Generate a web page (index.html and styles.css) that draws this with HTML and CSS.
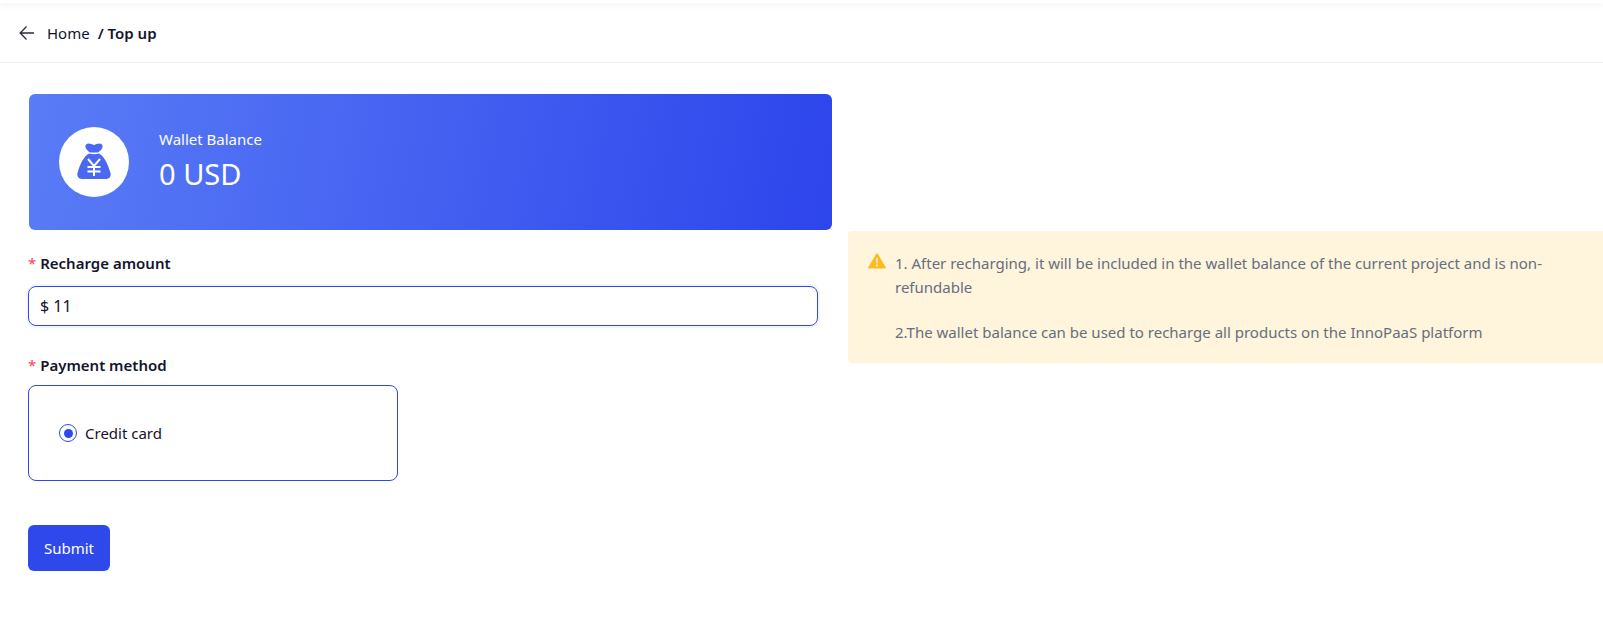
FILE: index.html
```html
<!DOCTYPE html>
<html lang="en">

<head>
    <meta charset="UTF-8">
    <title>Top up</title>
    <link rel="stylesheet" href="styles.css">
</head>

<body>
    <div class="top-strip"></div>
    <div class="topbar">
        <svg class="back" width="16" height="16" viewBox="0 0 16 16" fill="none" stroke="#2b2b3a" stroke-width="1.3">
            <path d="M15 8H1.5M7.5 1.5L1.2 8l6.3 6.5" />
        </svg>
        <span class="crumb">Home</span>
        <span class="crumb-current">/ Top up</span>
    </div>

    <div class="content">
        <div class="left">
            <div class="wallet">
                <div class="wallet-icon">
                    <svg class="bag" width="34" height="36" viewBox="0 0 34 36">
                        <path fill="#4a68f0" d="M9 1.500C11-.5 14 .5 17 2 20 .5 23-.5 25 1.500 27 4 24 8 21 9.500H13C10 8 7 4 9 1.500Z" />
                        <path fill="#4a68f0" d="M12 10.500C15 11.500 19 11.500 22 10.500 27 13 31 21 33.500 30 34.300 33.500 32.500 36 29.500 36H4.500C1.500 36-.3 33.500 .5 30 3 21 7 13 12 10.500Z" />
                        <path fill="none" stroke="#fff" stroke-width="2" d="M11 16l6 7 6-7M17 23V33M10.500 24h13M10.500 28.500h13" />
                    </svg>
                </div>
                <div class="wallet-text">
                    <div class="wallet-label">Wallet Balance</div>
                    <div class="wallet-value">0 USD</div>
                </div>
            </div>

            <div class="field-label amount-label"><span class="req">*</span> Recharge amount</div>
            <div class="amount-input">$ 11</div>

            <div class="field-label method-label"><span class="req">*</span> Payment method</div>
            <div class="method-box">
                <span class="radio"></span>
                <span>Credit card</span>
            </div>

            <button class="submit" type="button">Submit</button>
        </div>

        <div class="notice">
            <svg class="notice-icon" width="18" height="16" viewBox="0 0 18 16">
                <path fill="#fdbc1c" d="M9 .5c.4 0 .7.2.9.5l7.800 13.300c.4.700 0 1.300-.8 1.300H1.100c-.8 0-1.200-.6-.8-1.300L8.100 1c.2-.3.5-.5.9-.5Z" />
                <path fill="#fff" d="M8.300 5h1.400l-.2 5.500h-1ZM8.200 11.600h1.600v1.600H8.200Z" />
            </svg>
            <div class="notice-text">
                <p>1. After recharging, it will be included in the wallet balance of the current project and is non-refundable</p>
                <p>2.The wallet balance can be used to recharge all products on the InnoPaaS platform</p>
            </div>
        </div>
    </div>
</body>

</html>
```

FILE: styles.css
```css
body {
    margin: 0;
    font-family: "Noto Sans", Arial, sans-serif;
    font-size: 15px;
    color: #14142b;
    background-color: #fff;
    overflow: hidden;
}

.top-strip {
    height: 3px;
    background-color: #fff;
    box-shadow: 0 2px 6px rgba(0, 0, 0, 0.07);
}

.topbar {
    height: 59px;
    padding-left: 19px;
    display: flex;
    align-items: center;
    border-bottom: 1px solid #f0f0f0;
}

.back {
    margin-right: 12px;
}

.crumb {
    margin-right: 8px;
}

.crumb-current {
    font-weight: 600;
}

.content {
    display: flex;
    align-items: flex-start;
    padding-left: 28px;
}

.left {
    width: 804px;
    flex-shrink: 0;
    padding-top: 31px;
}

.wallet {
    height: 136px;
    margin-left: 1px;
    display: flex;
    align-items: center;
    padding-left: 30px;
    border-radius: 6px;
    background: linear-gradient(100deg, #5a7cf6, #2d45ec);
    color: #fff;
}

.wallet-icon {
    width: 70px;
    height: 70px;
    border-radius: 50%;
    background-color: #fff;
    display: flex;
    align-items: center;
    justify-content: center;
    margin-right: 30px;
}

.bag {
    margin-bottom: 2px;
}

.wallet-text {
    margin-bottom: 3px;
}

.wallet-label {
    line-height: 20px;
}

.wallet-value {
    font-size: 29px;
    line-height: 38px;
    margin-top: 6px;
}

.field-label {
    font-weight: 600;
    line-height: 20px;
}

.amount-label {
    margin-top: 23px;
}

.method-label {
    margin-top: 29px;
}

.req {
    color: #f5424d;
    font-weight: 400;
}

.amount-input {
    height: 38px;
    margin-top: 13px;
    padding-left: 11px;
    width: 777px;
    display: flex;
    align-items: center;
    font-size: 16px;
    border: 1px solid #2f48ec;
    border-radius: 8px;
    box-shadow: 0 0 0 2px #f2f4fe;
}

.method-box {
    width: 338px;
    height: 94px;
    margin-top: 10px;
    padding-left: 30px;
    display: flex;
    align-items: center;
    gap: 8px;
    border: 1px solid #2f48ec;
    border-radius: 8px;
}

.radio {
    width: 16px;
    height: 16px;
    border: 1px solid #2f48ec;
    border-radius: 50%;
    display: flex;
    align-items: center;
    justify-content: center;
}

.radio::after {
    content: "";
    width: 9px;
    height: 9px;
    border-radius: 50%;
    background-color: #2f48ec;
}

.submit {
    display: block;
    width: 82px;
    height: 46px;
    margin-top: 44px;
    border: none;
    border-radius: 6px;
    background-color: #2f48ec;
    color: #fff;
    font-family: inherit;
    font-size: 15px;
}

.notice {
    flex: 1;
    height: 132px;
    box-sizing: border-box;
    margin-top: 168px;
    margin-left: 16px;
    padding: 20px 40px 0 20px;
    display: flex;
    gap: 9px;
    border-radius: 4px 0 0 4px;
    background-color: #fff5dc;
    color: #666e7f;
}

.notice-icon {
    flex-shrink: 0;
    margin-top: 2px;
}

.notice-text p {
    margin: 0 0 21px;
    line-height: 24px;
}
```
